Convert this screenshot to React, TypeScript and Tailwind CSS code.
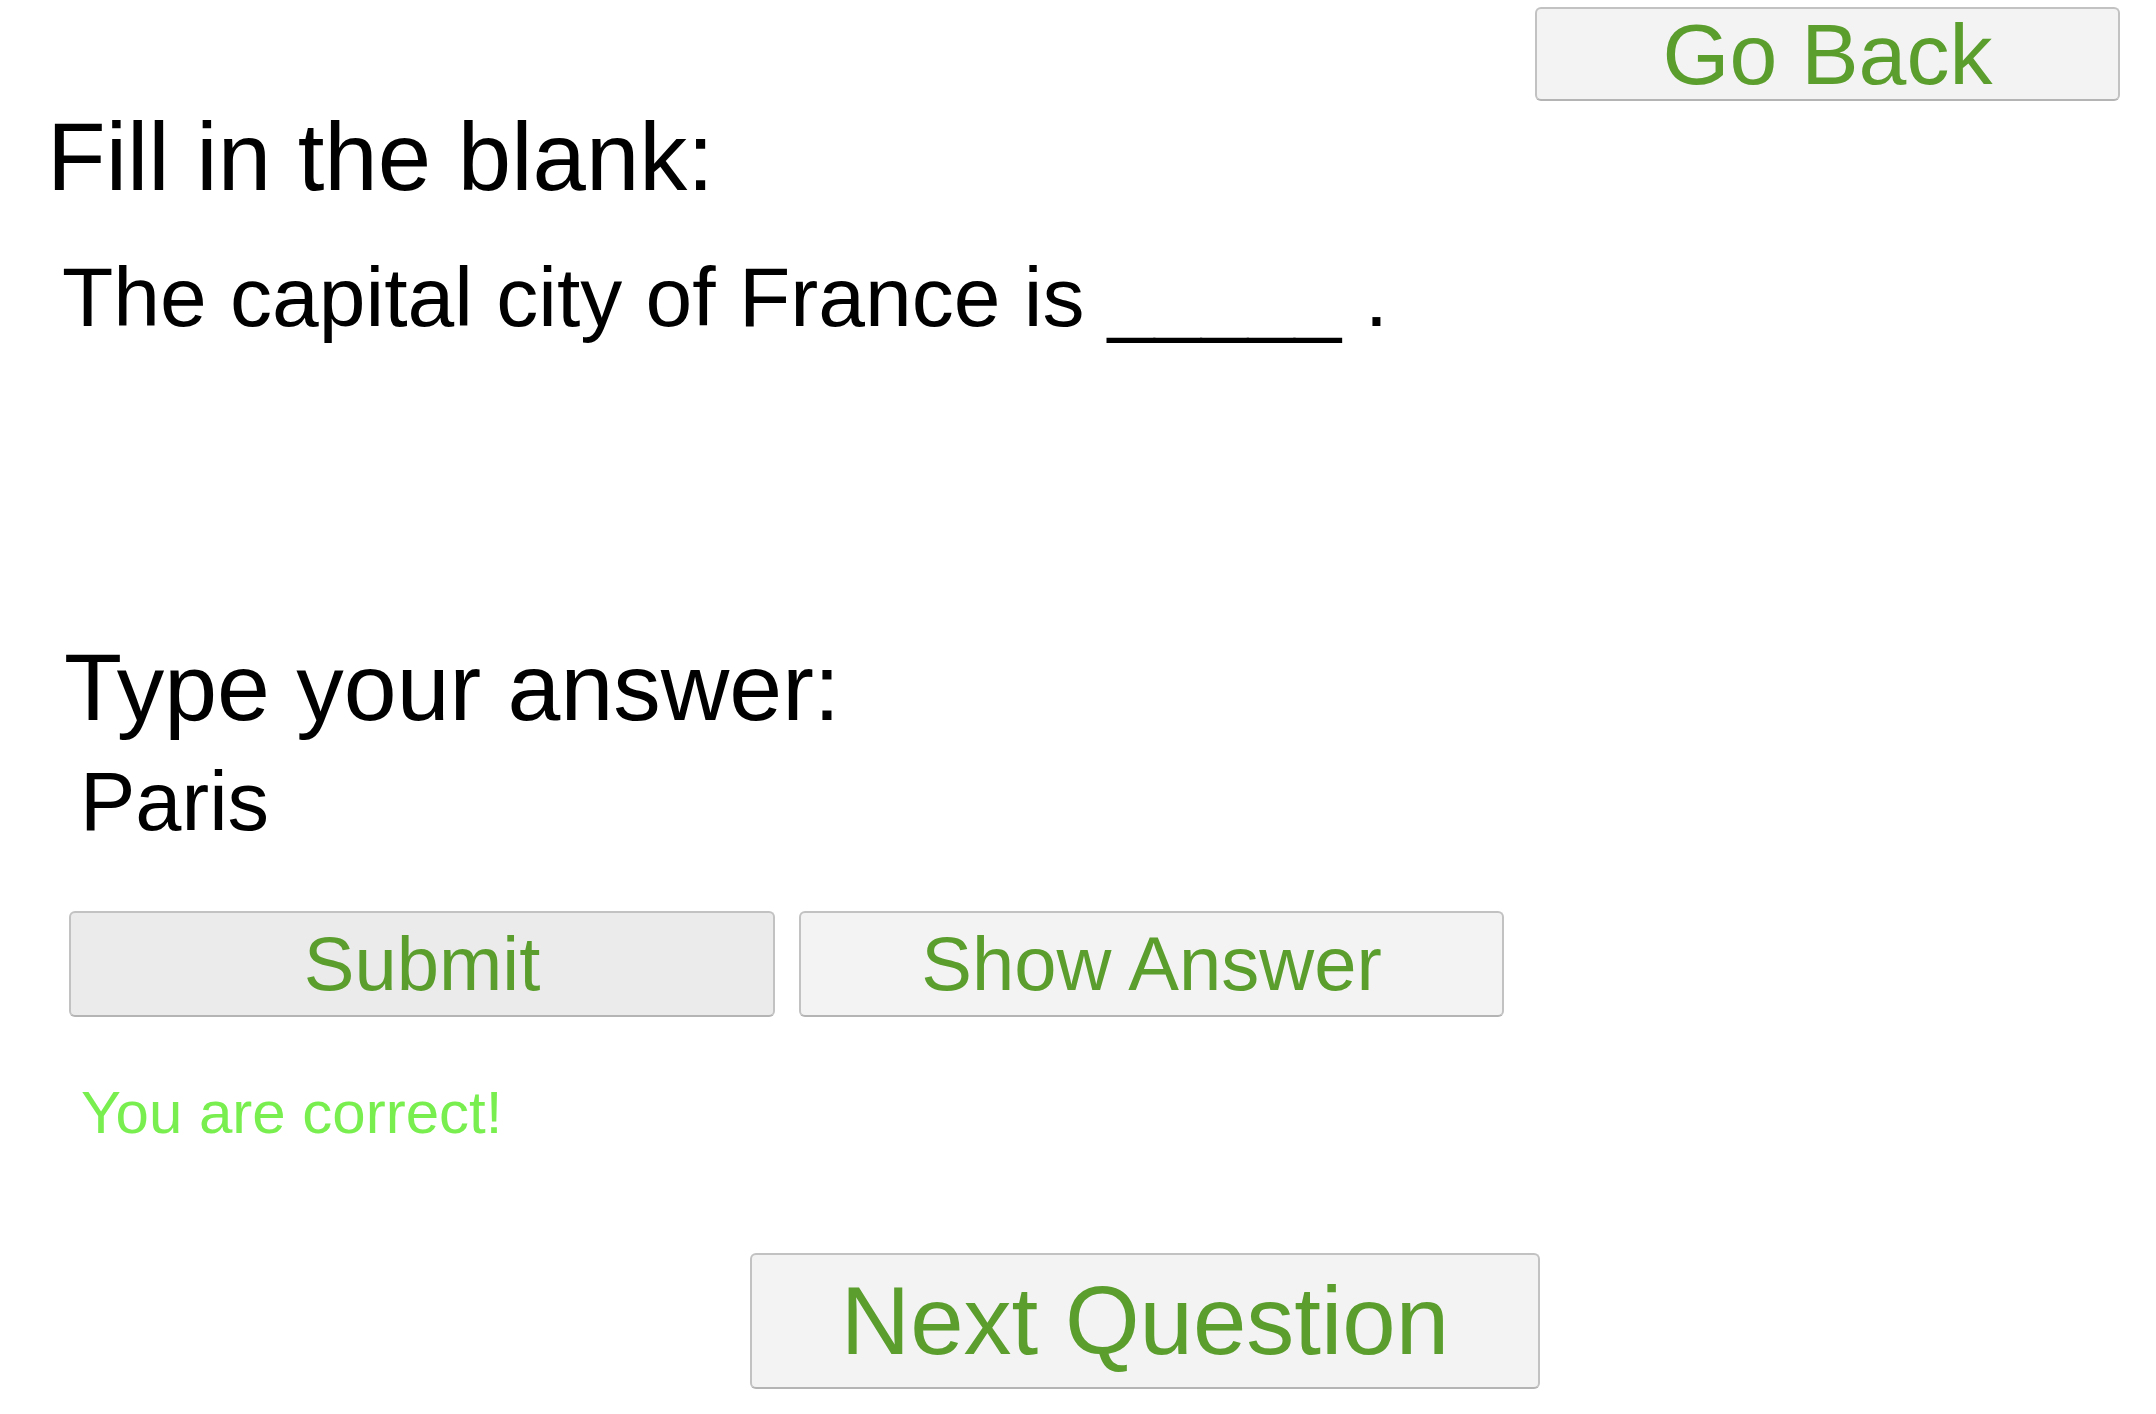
import React from "react";

function QuizButton({ label, className }: { label: string; className: string }) {
  return (
    <button
      type="button"
      className={`flex items-center justify-center rounded-[6px] border-2 border-[#c2c2c2] border-b-[#b4b4b4] leading-none text-[#5b9e2e] ${className}`}
    >
      {label}
    </button>
  );
}

export default function App() {
  return (
    <div className="min-h-[1414px] w-[2156px] bg-white font-['Liberation_Sans',Arial,sans-serif] text-black">
      {/* Header */}
      <div className="flex justify-end pr-[36px] pt-[7px]">
        <QuizButton label="Go Back" className="h-[94px] w-[585px] bg-[#f3f3f3] text-[86px]" />
      </div>

      {/* Question */}
      <h1 className="mt-[8px] pl-[47px] text-[96px] leading-none">Fill in the blank:</h1>
      <p className="mt-[50px] pl-[62px] text-[84px] leading-none">The capital city of France is _____ .</p>

      {/* Answer */}
      <h2 className="mt-[301px] pl-[64px] text-[95px] leading-none">Type your answer:</h2>
      <p className="mt-[25px] pl-[80px] text-[83px] leading-none">Paris</p>

      <div className="mt-[68px] flex gap-[24px] pl-[69px]">
        <QuizButton label="Submit" className="h-[106px] w-[706px] bg-[#ebebeb] text-[76px]" />
        <QuizButton label="Show Answer" className="h-[106px] w-[705px] bg-[#f3f3f3] text-[76px]" />
      </div>

      <p className="mt-[66px] pl-[81px] text-[60px] leading-none text-[#78ef4f]">You are correct!</p>

      <div className="mt-[110px] pl-[750px]">
        <QuizButton label="Next Question" className="h-[136px] w-[790px] bg-[#f3f3f3] text-[96px]" />
      </div>
    </div>
  );
}
